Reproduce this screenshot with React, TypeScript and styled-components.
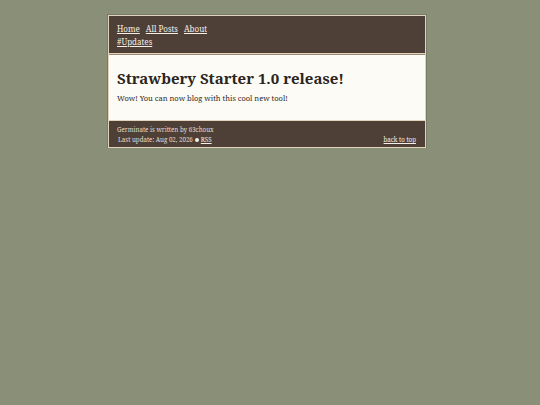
import React from 'react';
import styled, { createGlobalStyle } from 'styled-components';

const GlobalStyle = createGlobalStyle`
  html, body {
    margin: 0;
    padding: 0;
    background: #8a8f78;
    font-family: 'Noto Serif', 'DejaVu Serif', serif;
  }
`;

// 页面外层
const Page = styled.div`
  padding: 15px 6px 0 0;
  display: flex;
  justify-content: center;
`;

// 主卡片
const Card = styled.div`
  width: 316px;
  border: 1px solid #e2d3bd;
  box-shadow: 0 0 0 1px #767a66;
  background: #4f4037;
`;

// 顶部导航
const Header = styled.header`
  padding: 6px 8px 5px;
  font-size: 8px;
  line-height: 13px;
  border-bottom: 1px solid #e2d3bd;
`;

const NavRow = styled.nav`
  display: flex;
  gap: 6px;
`;

const NavLink = styled.a`
  color: #f5efe6;
  text-decoration: underline;
`;

// 正文
const Main = styled.main`
  background: #fdfbf5;
  border-top: 1px solid #9b8a78;
  padding: 13px 8px 16px;
`;

const Title = styled.h1`
  margin: 0 0 5px;
  font-size: 15px;
  line-height: 20px;
  font-weight: 700;
  color: #2a2521;
`;

const Body = styled.p`
  margin: 0;
  font-size: 7.5px;
  line-height: 11px;
  color: #2f2a26;
`;

// 页脚
const Footer = styled.footer`
  border-top: 1px solid #e2d3bd;
  padding: 4px 9px 2px 8px;
  display: flex;
  justify-content: space-between;
  align-items: flex-end;
  font-size: 6.2px;
  line-height: 10px;
  color: #e3dbd0;
`;

const FooterText = styled.div<{ $indent?: number }>`
  padding-left: ${p => p.$indent ?? 0}px;
`;

const FooterLink = styled.a`
  color: #f5efe6;
  text-decoration: underline;
`;

const Dot = styled.span`
  display: inline-block;
  width: 4px;
  height: 4px;
  border-radius: 50%;
  background: #f5efe6;
  margin: 0 2px;
  vertical-align: 0;
`;

export default function App() {
  return (
    <>
      <GlobalStyle />
      <Page>
        <Card>
          <Header>
            <NavRow>
              <NavLink href="#">Home</NavLink>
              <NavLink href="#">All Posts</NavLink>
              <NavLink href="#">About</NavLink>
            </NavRow>
            <NavRow>
              <NavLink href="#">#Updates</NavLink>
            </NavRow>
          </Header>
          <Main>
            <Title>Strawbery Starter 1.0 release!</Title>
            <Body>Wow! You can now blog with this cool new tool!</Body>
          </Main>
          <Footer>
            <div>
              <FooterText>Germinate is written by 63choux</FooterText>
              <FooterText $indent={1}>
                Last update: Aug 02, 2026
                <Dot />
                <FooterLink href="#">RSS</FooterLink>
              </FooterText>
            </div>
            <FooterLink href="#">back to top</FooterLink>
          </Footer>
        </Card>
      </Page>
    </>
  );
}
